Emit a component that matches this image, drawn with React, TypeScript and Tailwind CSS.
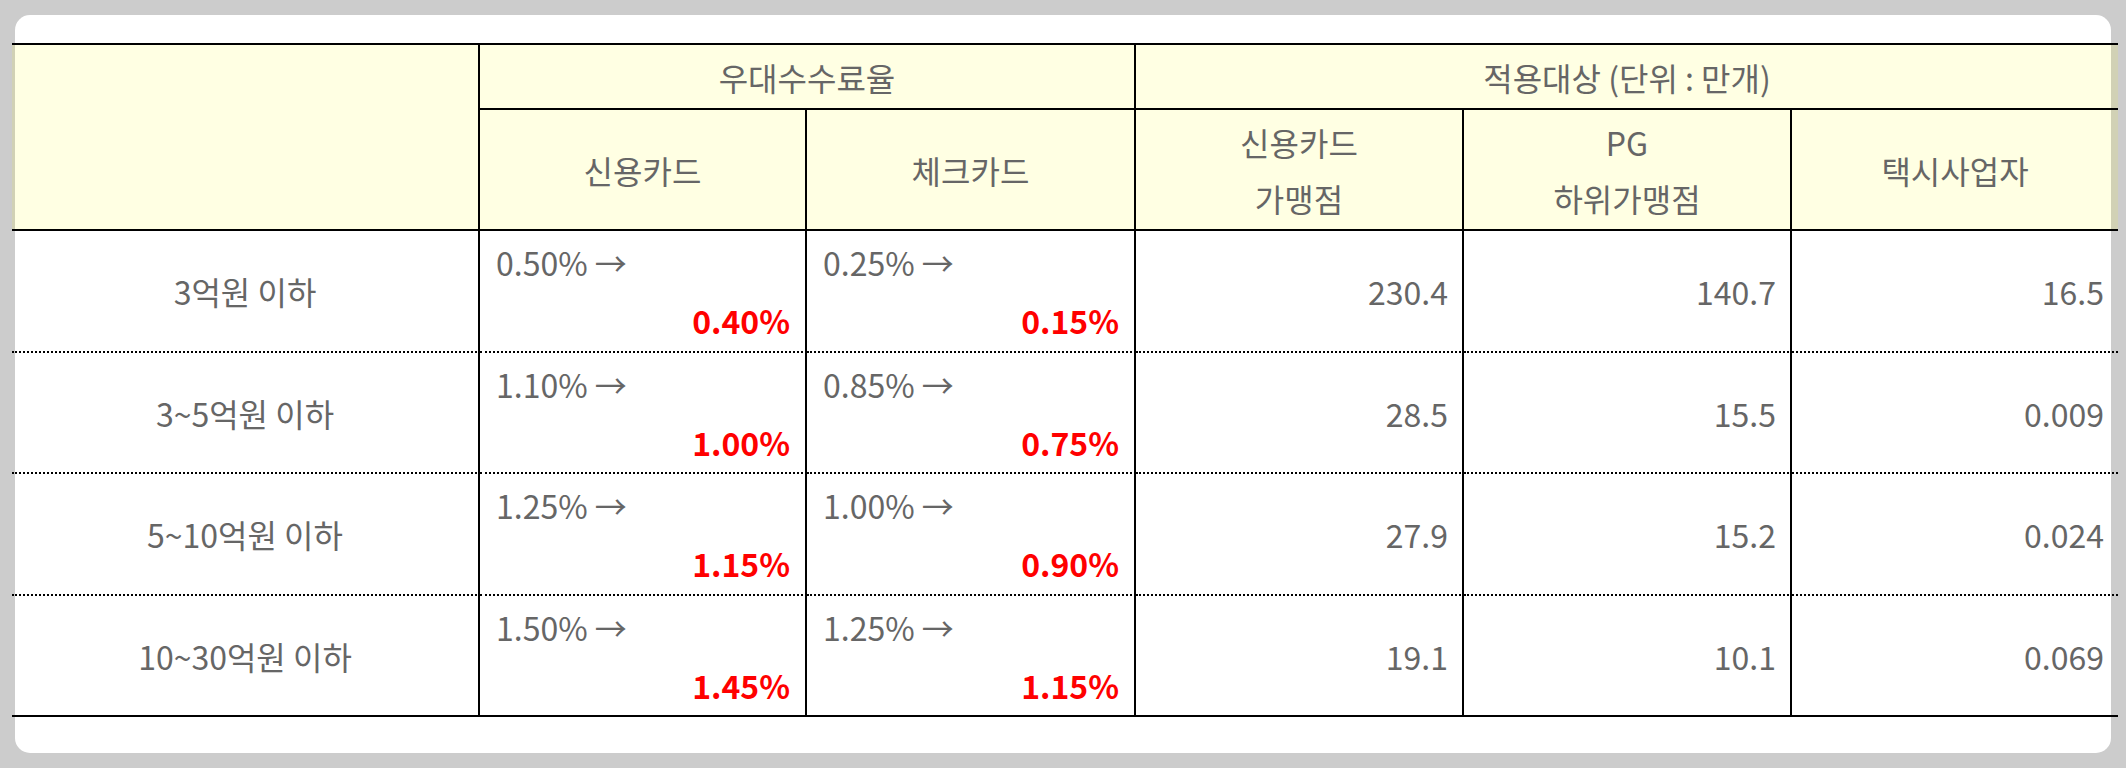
import React from "react";

const rows = [
  { label: "3억원 이하", c1: ["0.50% →", "0.40%"], c2: ["0.25% →", "0.15%"], n: ["230.4", "140.7", "16.5"] },
  { label: "3~5억원 이하", c1: ["1.10% →", "1.00%"], c2: ["0.85% →", "0.75%"], n: ["28.5", "15.5", "0.009"] },
  { label: "5~10억원 이하", c1: ["1.25% →", "1.15%"], c2: ["1.00% →", "0.90%"], n: ["27.9", "15.2", "0.024"] },
  { label: "10~30억원 이하", c1: ["1.50% →", "1.45%"], c2: ["1.25% →", "1.15%"], n: ["19.1", "10.1", "0.069"] },
];

function RateCell({ v, last }: { v: string[]; last: boolean }) {
  return (
    <div
      className={`flex flex-col pt-[2px] pl-[16px] pr-[15px] border-r-2 border-black border-b-2 ${
        last ? "" : "[border-bottom-style:dotted]"
      }`}
    >
      <div className="leading-[58px] text-left">{v[0]}</div>
      <div className="leading-[58px] text-right font-bold text-[#ff0000]">{v[1]}</div>
    </div>
  );
}

export default function App() {
  return (
    <div
      className="min-h-screen bg-[#cccccc] p-[15px] text-[#666666] text-[32px]"
      style={{ fontFamily: '"Noto Sans CJK KR", "Noto Sans", sans-serif' }}
    >
      <div className="w-[2096px] h-[738px] bg-white rounded-[15px] pt-[28px]">
        <div className="ml-[-3px] w-[2106px] border-t-2 border-black grid grid-cols-[468px_327px_329px_328px_328px_326px] grid-rows-[65px_121px_122px_121px_122px_121px]">
          {/* header */}
          <div className="row-span-2 bg-[#ffff001c] border-r-2 border-b-2 border-black" />
          <div className="col-span-2 bg-[#ffff001c] border-r-2 border-b-2 border-black flex items-center justify-center leading-[58px]">
            우대수수료율
          </div>
          <div className="col-span-3 bg-[#ffff001c] border-b-2 border-black flex items-center justify-center leading-[58px]">
            적용대상 (단위 : 만개)
          </div>
          <div className="bg-[#ffff001c] border-r-2 border-b-2 border-black flex items-center justify-center leading-[58px]">
            신용카드
          </div>
          <div className="bg-[#ffff001c] border-r-2 border-b-2 border-black flex items-center justify-center leading-[58px]">
            체크카드
          </div>
          <div className="bg-[#ffff001c] border-r-2 border-b-2 border-black flex flex-col items-center justify-center leading-[56px]">
            <span>신용카드</span>
            <span>가맹점</span>
          </div>
          <div className="bg-[#ffff001c] border-r-2 border-b-2 border-black flex flex-col items-center justify-center leading-[56px]">
            <span>PG</span>
            <span>하위가맹점</span>
          </div>
          <div className="bg-[#ffff001c] border-b-2 border-black flex items-center justify-center leading-[58px]">
            택시사업자
          </div>

          {rows.map((r, i) => {
            const last = i === rows.length - 1;
            const bb = last ? "border-b-2 border-black" : "border-b-2 border-black [border-bottom-style:dotted]";
            return (
              <React.Fragment key={i}>
                <div className={`flex items-center justify-center border-r-2 ${bb}`}>{r.label}</div>
                <RateCell v={r.c1} last={last} />
                <RateCell v={r.c2} last={last} />
                <div className={`flex items-center justify-end pr-[14px] border-r-2 ${bb}`}>{r.n[0]}</div>
                <div className={`flex items-center justify-end pr-[14px] border-r-2 ${bb}`}>{r.n[1]}</div>
                <div className={`flex items-center justify-end pr-[14px] ${bb}`}>{r.n[2]}</div>
              </React.Fragment>
            );
          })}
        </div>
      </div>
    </div>
  );
}
